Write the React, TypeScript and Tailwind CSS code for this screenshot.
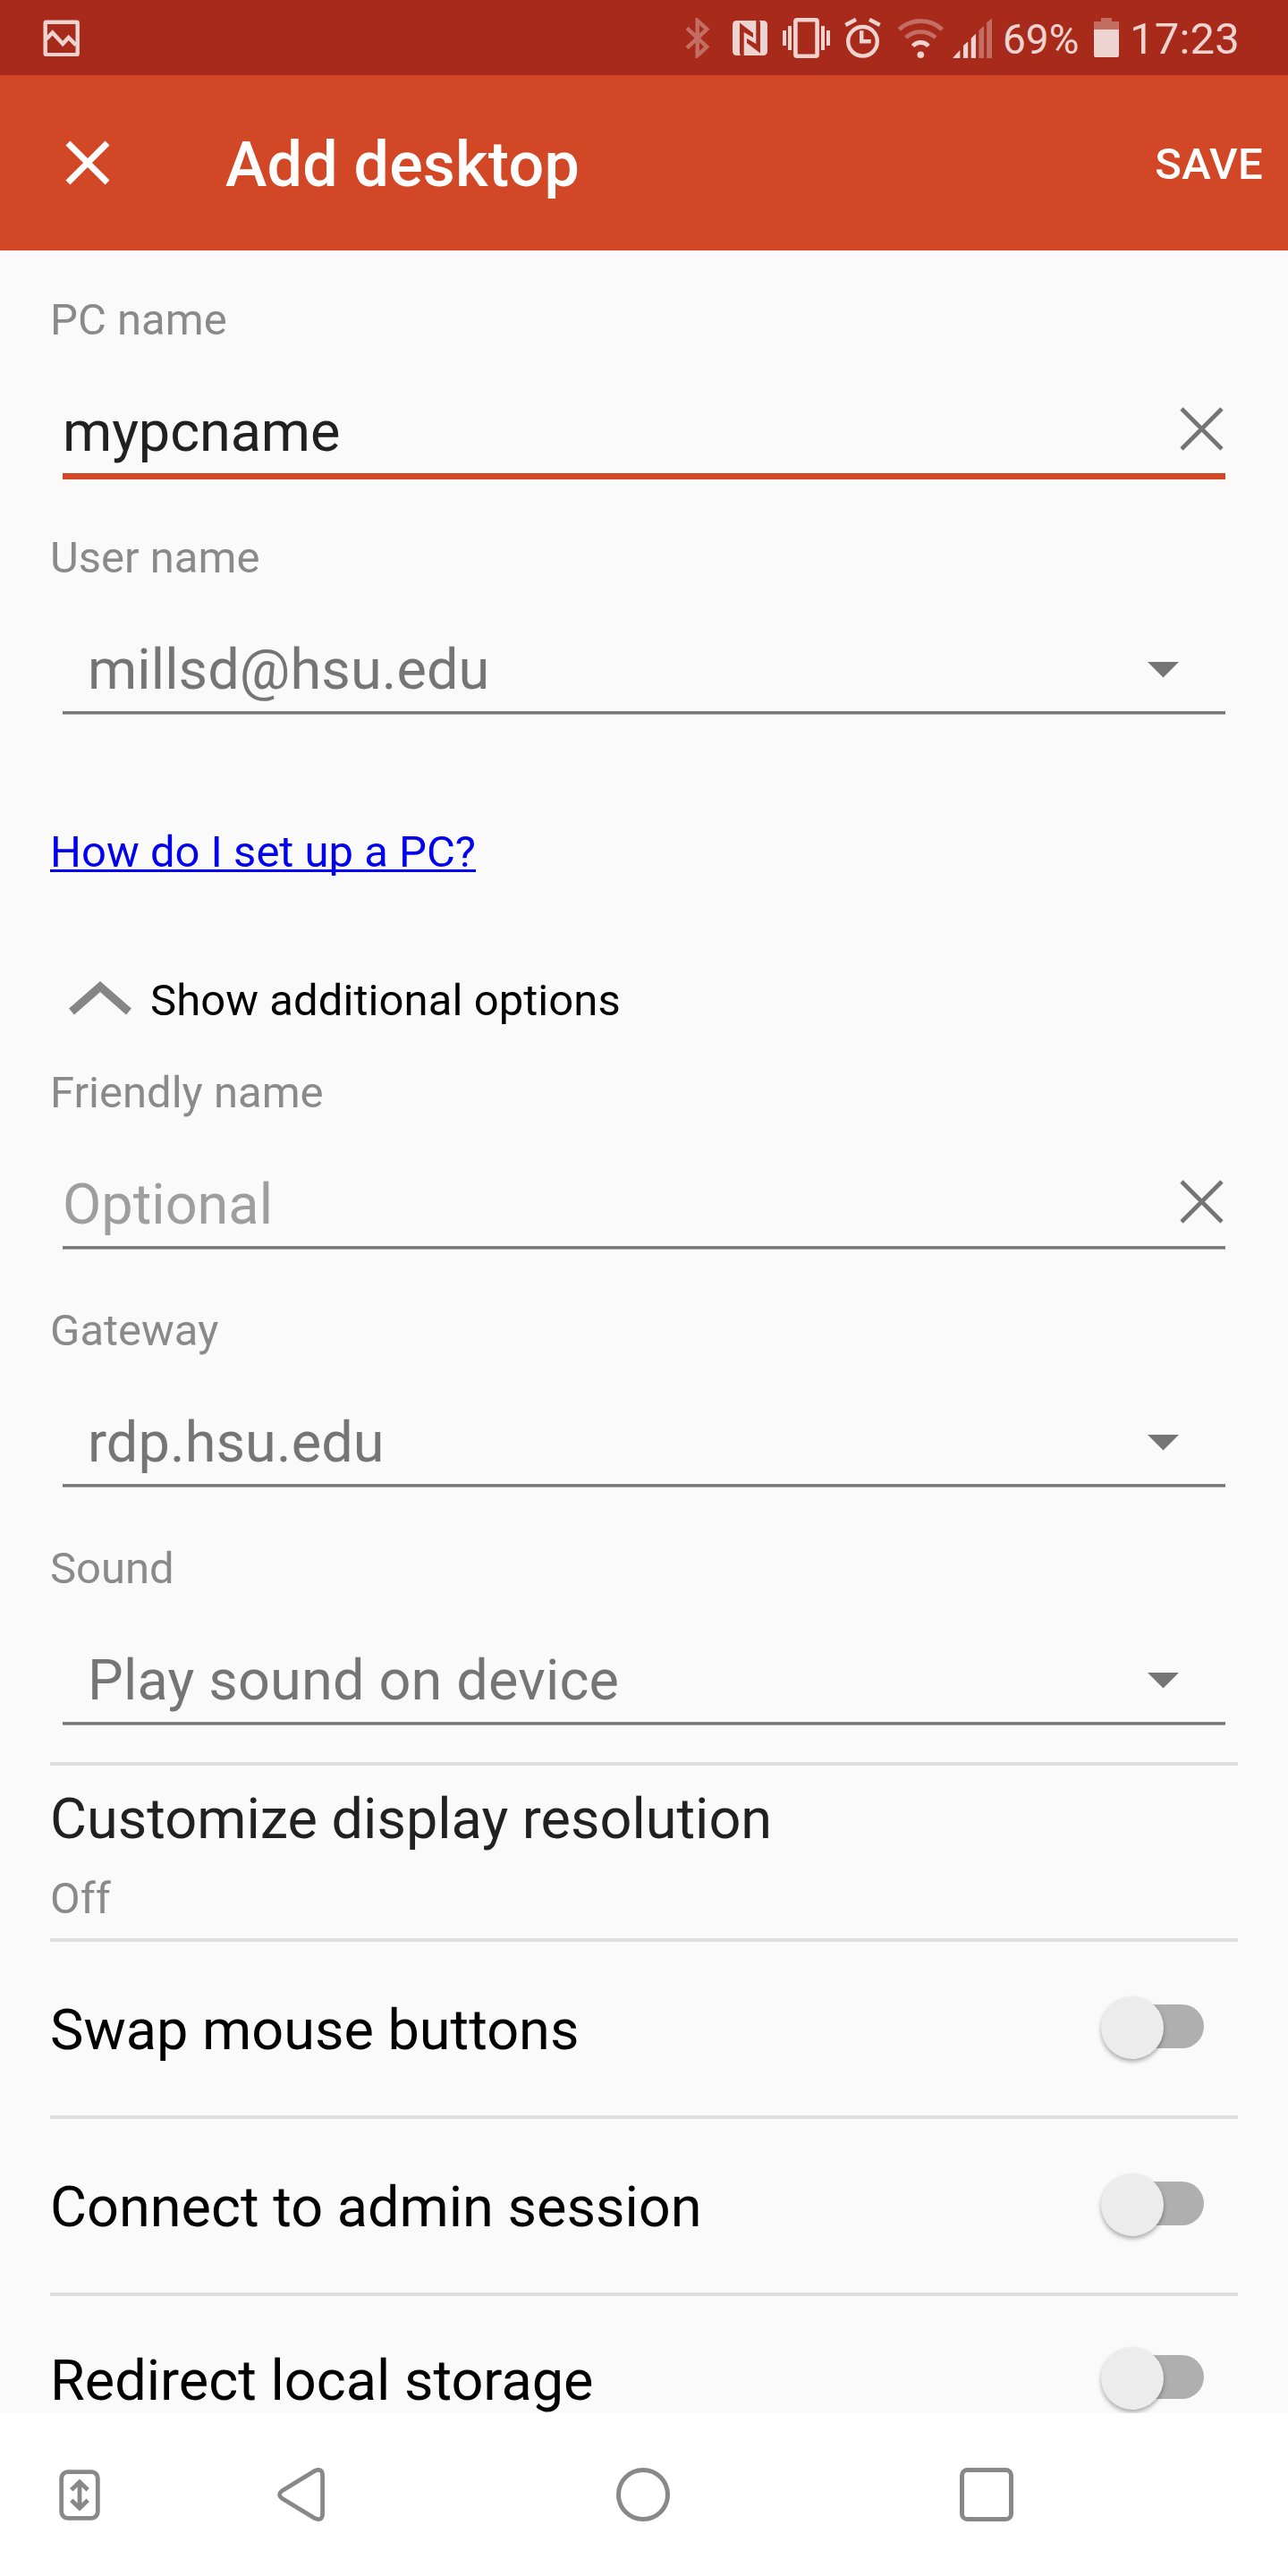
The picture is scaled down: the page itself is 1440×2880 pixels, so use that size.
import type { ReactNode } from "react";
import { MdClose } from "react-icons/md";

const SWITCHES = ["Swap mouse buttons", "Connect to admin session", "Redirect local storage"];

function StatusBar() {
  return (
    <div className="flex h-[84px] shrink-0 items-center justify-between bg-[#a82a1a] pl-12 text-[#eed4d1]">
      <svg width="41" height="41" viewBox="0 0 41 41" fill="none" stroke="currentColor" strokeWidth="4.4">
        <rect x="2.7" y="2.7" width="36" height="36.4" rx="1" />
        <path d="M4 21.5L10.7 14.5L22.2 27L28.7 20L37 28.5" />
      </svg>
      <div className="flex w-[674px] items-center">
        <svg width="28" height="45" viewBox="0 0 28 45" fill="none" stroke="currentColor" strokeWidth="4.4" className="opacity-40">
          <path d="M2 11.4L24.3 32.5L13.7 42V3L24.3 12.5L2 33.6" />
        </svg>
        <svg width="39" height="39" viewBox="0 0 39 39" fill="currentColor" fillRule="evenodd" className="ml-[25px]">
          <path d="M5 0H34Q39 0 39 5V34Q39 39 34 39H5Q0 39 0 34V5Q0 0 5 0ZM8 2.5L23 14V19L12.7 13V39H10Q8 39 8 36ZM31 36.5L16 25V20L26.3 26V0H29Q31 0 31 3Z" />
        </svg>
        <svg width="53" height="45" viewBox="0 0 53 45" fill="currentColor" className="ml-[17px]">
          <rect x="14.4" y="2.3" width="24.2" height="40.4" rx="1.5" fill="none" stroke="currentColor" strokeWidth="4.6" />
          <path d="M0 14h4v17h-4zM6 9h4v27h-4zM43 9h4v27h-4zM49 14h4v17h-4z" />
        </svg>
        <svg width="41" height="45" viewBox="0 0 41 45" fill="none" stroke="currentColor" strokeWidth="4.4" className="ml-4">
          <circle cx="20.5" cy="26.3" r="16.3" />
          <path d="M19.2 14.3V26.2H29.7M1.3 8L13 1.8M28 1.8L39.7 8" />
        </svg>
        <svg width="53" height="45" viewBox="0 0 53 45" fill="none" stroke="currentColor" strokeWidth="4.8" className="ml-[18px]">
          <path d="M2.3 13A35 35 0 0 1 50.3 13M9.7 22A25 25 0 0 1 42.9 22" opacity=".4" />
          <path d="M17.6 31.5A11.5 11.5 0 0 1 35 31.5" />
          <circle cx="26.3" cy="41.2" r="3.8" fill="currentColor" stroke="none" />
        </svg>
        <svg width="44" height="45" viewBox="0 0 44 45" fill="currentColor" className="ml-[9px]">
          <path d="M0 45L8.3 36V45ZM12 45V31L17.2 26.5V45ZM20.7 45V22.7L26 17.7V45Z" />
          <path d="M29.4 45V14L35 9V45ZM38.2 45V5.3L44 .5V45Z" opacity=".4" />
        </svg>
        <span className="mt-[3px] ml-3 w-[102px] text-[46px] leading-[54px]">69%</span>
        <svg width="28" height="44" viewBox="0 0 28 44" fill="currentColor">
          <path d="M0 13V4H8V0H20V4H28V13Z" opacity=".4" />
          <path d="M0 13H28V42Q28 44 26 44H2Q0 44 0 42Z" />
        </svg>
        <span className="mt-0.5 ml-3 text-[49px] leading-[57px] tracking-[0.2px]">17:23</span>
      </div>
    </div>
  );
}

function ClearIcon() {
  return (
    <svg width="49" height="49" viewBox="0 0 49 49" stroke="#757575" strokeWidth="4.6" className="mr-0.5 mb-[7px]">
      <path d="M2 2L47 47M47 2L2 47" />
    </svg>
  );
}

function Caret() {
  return (
    <svg width="35" height="18" viewBox="0 0 35 18" fill="#757575" className="mr-[52px]">
      <path d="M0 0H35L17.5 17.5Z" />
    </svg>
  );
}

function Field({ label, children, focused }: { label: string; children: ReactNode; focused?: boolean }) {
  return (
    <div>
      <p className="text-[49px] leading-[57px] text-[#8a8a8a]">{label}</p>
      <div className="mx-3.5 flex items-center justify-between pt-[60px] pb-[9px] text-[63px] leading-[74px]">
        {children}
      </div>
      <div className="mx-3.5 h-[7px]">
        <div className={focused ? "h-[7px] bg-[#d24726]" : "h-1 border-y border-t-[#8c8c8c] border-b-[#a3a3a3] bg-[#757575]"} />
      </div>
    </div>
  );
}

function Divider() {
  return <div className="h-1 shrink-0 bg-[#dedede]" />;
}

function Switch() {
  return (
    <div className="mr-[38px] mb-[3px] flex h-[70px] w-[115px] items-center">
      <div className="relative z-10 size-[70px] shrink-0 rounded-full bg-[#ececec] shadow-[0_3px_5px_rgba(0,0,0,0.32)]" />
      <div className="mb-[3px] -ml-9 h-[49px] w-[81px] rounded-r-full bg-[#afafaf]" />
    </div>
  );
}

function NavBar() {
  return (
    <div className="flex h-[182px] shrink-0 items-center bg-white pl-[66px]">
      <svg width="46" height="57" viewBox="0 0 46 57" fill="none" stroke="#888" strokeWidth="4.8">
        <rect x="2.7" y="2.7" width="40.6" height="51.6" rx="7" />
        <path d="M23 15V42M13.8 22.8L23 13.8L32.2 22.8M13.8 34.2L23 43.2L32.2 34.2" />
      </svg>
      <svg width="54" height="60" viewBox="0 0 54 60" fill="none" stroke="#888" strokeWidth="4.8" className="ml-[198px]">
        <path d="M42 3.4L5 26Q0 30 5 34L42 56.6Q50.6 60 50.6 51V9Q50.6 0 42 3.4Z" />
      </svg>
      <svg width="60" height="60" viewBox="0 0 60 60" fill="none" stroke="#888" strokeWidth="5" className="ml-[325px]">
        <circle cx="30" cy="30" r="27.5" />
      </svg>
      <svg width="60" height="60" viewBox="0 0 60 60" fill="none" stroke="#888" strokeWidth="5" className="ml-[324px]">
        <rect x="2.5" y="2.5" width="55" height="55" rx="6" />
      </svg>
    </div>
  );
}

export default function App() {
  return (
    <div className="flex h-[2880px] w-[1440px] flex-col overflow-hidden bg-[#fafafa] font-['Roboto',sans-serif] text-black">
      <StatusBar />
      <header className="flex h-[196px] shrink-0 items-center bg-[#d24726] pr-7 pl-14 font-medium text-white">
        <MdClose size={84} />
        <h1 className="mt-1 ml-28 text-[70px] leading-[82px] tracking-[0.2px]">Add desktop</h1>
        <span className="mt-0.5 ml-auto text-[49px] leading-[57px] tracking-[0.3px]">SAVE</span>
      </header>

      <main className="flex h-[2418px] shrink-0 flex-col overflow-hidden px-14 pt-[49px]">
        <div className="flex flex-col gap-[59px]">
          <Field label="PC name" focused>
            <span className="tracking-[-0.1px] text-[#212121]">mypcname</span>
            <ClearIcon />
          </Field>
          <Field label="User name">
            <span className="pl-7 tracking-[0.1px] text-[#757575]">millsd@hsu.edu</span>
            <Caret />
          </Field>
        </div>

        <a className="mt-[122px] self-start text-[49px] leading-[57px] text-[#0000ee] underline decoration-[3px] underline-offset-[3px] [text-decoration-skip-ink:none]">
          How do I set up a PC?
        </a>

        <div className="mt-[109px] flex items-center text-[49px] leading-[57px] tracking-[0.07px]">
          <svg width="70" height="38" viewBox="0 0 70 38" fill="none" stroke="#858585" strokeWidth="9" className="mr-[21px] mb-1.5 ml-[21px]">
            <path d="M3 34L35 6L67 34" />
          </svg>
          Show additional options
        </div>

        <div className="mt-[46px] flex flex-col gap-[59px]">
          <Field label="Friendly name">
            <span className="text-[#9e9e9e]">Optional</span>
            <ClearIcon />
          </Field>
          <Field label="Gateway">
            <span className="pl-7 tracking-[0.1px] text-[#757575]">rdp.hsu.edu</span>
            <Caret />
          </Field>
          <Field label="Sound">
            <span className="pl-7 tracking-[0.18px] text-[#757575]">Play sound on device</span>
            <Caret />
          </Field>
        </div>

        <div className="mt-[38px]">
          <Divider />
          <div className="pt-[23px] pb-4">
            <p className="text-[63px] leading-[74px] text-[#212121]">Customize display resolution</p>
            <p className="mt-[23px] text-[49px] leading-[57px] text-[#8a8a8a]">Off</p>
          </div>
          {SWITCHES.map((label, i) => (
            <div key={label}>
              <Divider />
              <div className={`flex items-center justify-between ${i === 2 ? "h-[186px]" : "h-[194px]"}`}>
                <span className="mt-1 text-[63px] leading-[74px]">{label}</span>
                <Switch />
              </div>
            </div>
          ))}
        </div>
      </main>

      <NavBar />
    </div>
  );
}
